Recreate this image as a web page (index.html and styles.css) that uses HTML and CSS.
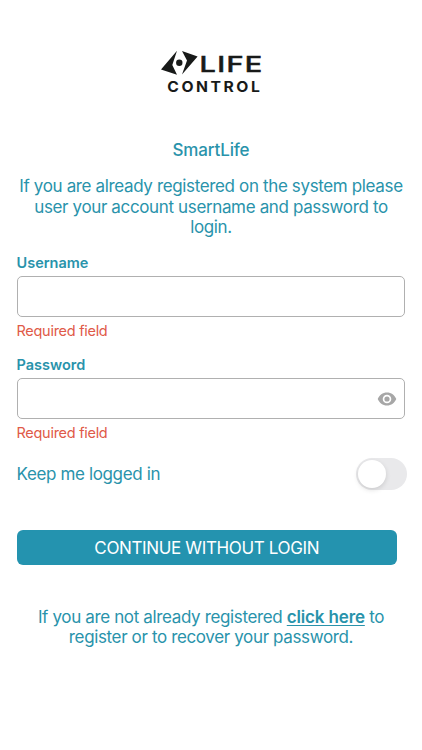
FILE: index.html
```html
<!DOCTYPE html>
<html lang="en">
<head>
<meta charset="utf-8">
<title>SmartLife</title>
<link rel="stylesheet" href="styles.css">
</head>
<body>
<main class="screen">
  <svg class="logo" width="106" height="50" viewBox="158 47 106 50" role="img" aria-label="Life Control">
    <path d="M161 69.600 L177 50.800 L172.300 65 L177 74.800 Z M182 50.900 L197.600 56.400 L182 74.600 L187 60.600 Z" fill="#181a19"/>
    <circle cx="179.300" cy="62.800" r="3.200" fill="#181a19"/>
    <text class="logo-life" x="199.600" y="72.300" textLength="64" lengthAdjust="spacingAndGlyphs">LIFE</text>
    <text class="logo-control" x="167.300" y="91.900" textLength="95" lengthAdjust="spacingAndGlyphs">CONTROL</text>
  </svg>
  <h1 class="title">SmartLife</h1>
  <p class="intro">If you are already registered on the system please<br>user your account username and password to<br>login.</p>
  <form class="form">
    <div class="group">
      <label class="label" for="username">Username</label>
      <div class="field"><input class="input" id="username" type="text"></div>
      <p class="error">Required field</p>
    </div>
    <div class="group">
      <label class="label" for="password">Password</label>
      <div class="field">
        <input class="input" id="password" type="password">
        <svg class="eye" width="20" height="14" viewBox="0 0 20 14"><path fill="#a7a7a7" fill-rule="evenodd" d="M10 .5C5.800 .5 2.200 3.200.7 7c1.500 3.800 5.100 6.500 9.300 6.500s7.800-2.700 9.300-6.500C17.800 3.200 14.200.5 10 .5ZM10 11.300a4.300 4.300 0 1 1 0-8.600 4.300 4.300 0 0 1 0 8.600ZM10 4.400a2.600 2.600 0 1 0 0 5.200 2.600 2.600 0 0 0 0-5.200Z"/></svg>
      </div>
      <p class="error">Required field</p>
    </div>
    <div class="remember">
      <span class="remember-text">Keep me logged in</span>
      <span class="toggle"><span class="thumb"></span></span>
    </div>
    <button class="button" type="button"><span>CONTINUE WITHOUT LOGIN</span></button>
  </form>
  <p class="footer">If you are not already registered <a class="link" href="#">click here</a> to<br>register or to recover your password.</p>
</main>
</body>
</html>
```
FILE: styles.css
```css
* { box-sizing: border-box; }
body { margin: 0; background: #fff; color: #2993ab; font-family: Inter, "Liberation Sans", sans-serif; }
.screen { display: flex; flex-direction: column; height: 750px; padding-top: 47px; overflow: hidden; }
.logo { display: block; margin-left: 158px; }
.logo text { font-family: Inter, sans-serif; fill: #181a19; }
.logo-life { font-size: 22px; font-weight: 500; letter-spacing: 1px; stroke: #181a19; stroke-width: .5px; }
.logo-control { font-size: 14.800px; font-weight: 700; letter-spacing: 2.400px; }
.title { margin: 42px 0 0; font-size: 17px; line-height: 22px; font-weight: 500; letter-spacing: -.15px; text-align: center; }
.intro { margin: 15px 0 0; font-size: 17px; letter-spacing: -.36px; line-height: 20.5px; text-align: center; white-space: nowrap; }
.form { display: flex; flex-direction: column; padding: 0 17px 0 16.500px; margin-top: 16px; }
.group { height: 102px; }
.label { display: block; font-size: 14.5px; line-height: 18px; font-weight: 600; }
.field { display: flex; align-items: center; height: 41px; margin-top: 4px; padding-right: 7px; border: 1px solid #b0b0b0; border-radius: 5px; }
.input { flex: 1; min-width: 0; height: 37px; border: 0; outline: 0; background: transparent; }
.eye { margin-top: 1px; }
.error { margin: 5px 0 0; font-size: 14.5px; letter-spacing: -.28px; line-height: 18px; color: #e05a48; }
.remember { display: flex; justify-content: space-between; align-items: center; height: 32px; margin-right: -2px; }
.remember-text { font-size: 17px; letter-spacing: -.36px; }
.toggle { display: flex; align-items: center; width: 51px; height: 32px; padding: 0 1.5px; border-radius: 16px; background: #e9e9eb; }
.thumb { width: 28px; height: 28px; border-radius: 50%; background: #fff; box-shadow: 0 2px 5px rgba(0,0,0,.13); }
.button { width: 380.5px; height: 35px; margin-top: 40px; padding: 0; border: 0; border-radius: 6px; background: #2493af; color: #fff; font: 400 17px/36px Inter, sans-serif; letter-spacing: -.36px; }
.footer { margin: 42px 0 0; font-size: 17px; letter-spacing: -.36px; line-height: 20.5px; text-align: center; white-space: nowrap; }
.link { color: inherit; font-weight: 600; letter-spacing: -.15px; text-underline-offset: 2px; }
```
